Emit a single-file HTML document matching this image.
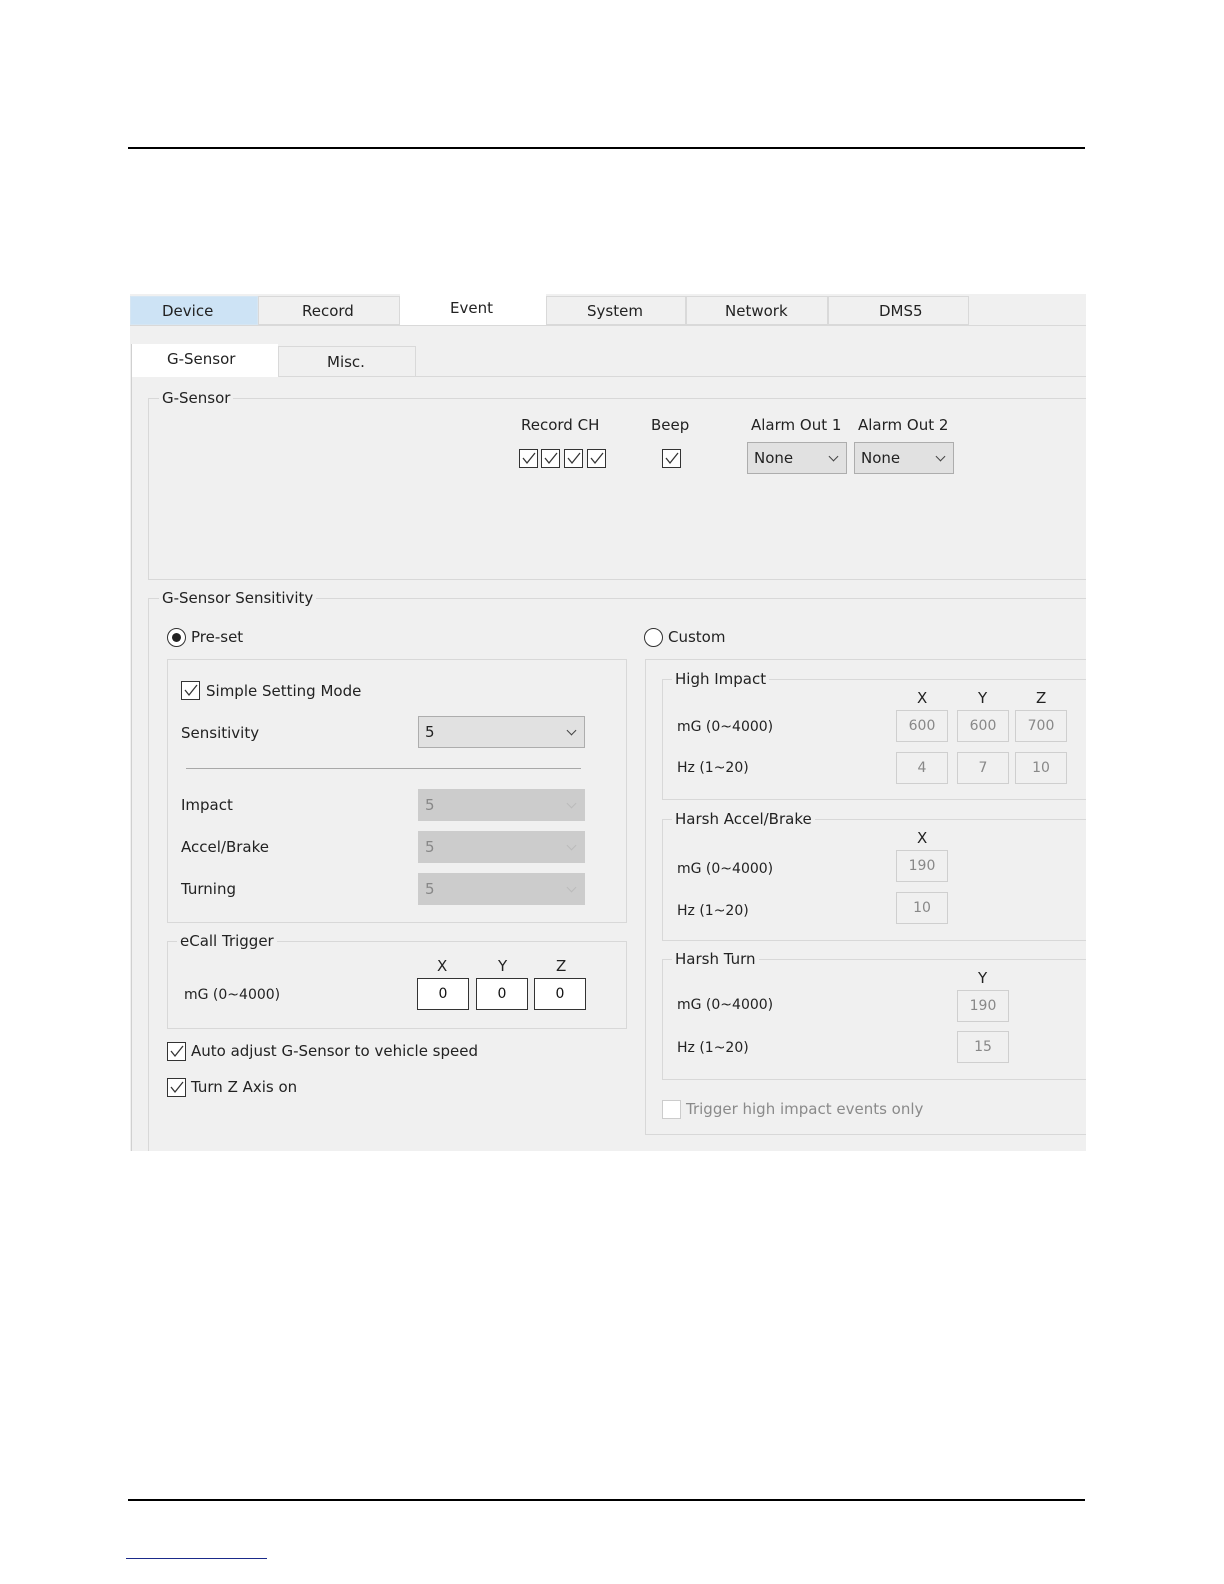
<!DOCTYPE html>
<html><head><meta charset="utf-8"><style>
body{margin:0;width:1224px;height:1584px;background:#fff;position:relative;overflow:hidden;font-family:"DejaVu Sans","Liberation Sans",sans-serif;font-size:14px;color:#222}
.a{position:absolute}
.t{position:absolute;white-space:nowrap;line-height:18px}
.g{position:absolute;border:1px solid #d8d8d8;}
.lb{position:absolute;background:#f0f0f0;padding:0 3px;line-height:18px;white-space:nowrap}
.cb{position:absolute;width:17px;height:17px;border:1px solid #333;background:#fff}
.cb svg{position:absolute;left:1px;top:2px}
.dd{position:absolute;border:1px solid #adadad;background:#e1e1e1;line-height:30px;padding-left:6px;box-sizing:border-box}
.dd.dis{background:#cccccc;border-color:#cccccc;color:#888}
.dd:after{content:"";position:absolute;right:9px;top:10px;width:6px;height:6px;border-right:1.3px solid #444;border-bottom:1.3px solid #444;transform:rotate(45deg)}
.dd.dis:after{border-color:#bbb}
.in{position:absolute;width:52px;height:32px;box-sizing:border-box;border:1px solid #cfcfcf;background:#f0f0f0;color:#888;text-align:center;line-height:30px}
.in.w{background:#fff;border:1px solid #333;color:#111}
.rd{position:absolute;width:17px;height:17px;border:1px solid #333;border-radius:50%;background:#fff}
</style></head><body>
<div class="a" style="left:128px;top:147px;width:957px;height:2px;background:#000"></div>
<div class="a" style="left:128px;top:1499px;width:957px;height:2px;background:#000"></div>
<div class="a" style="left:126px;top:1558px;width:141px;height:1px;background:#1a2a8a"></div>

<div class="a" style="left:130px;top:294px;width:956px;height:857px;background:#f0f0f0"></div>
<div class="a" style="left:130px;top:296px;width:128px;height:29px;background:#cde3f5;border:1px solid #d6e6f3;box-sizing:border-box"></div>
<div class="a" style="left:258px;top:296px;width:142px;height:29px;background:#f0f0f0;border:1px solid #d9d9d9;box-sizing:border-box"></div>
<div class="a" style="left:400px;top:294px;width:146px;height:32px;background:#fff"></div>
<div class="a" style="left:546px;top:296px;width:140px;height:29px;border:1px solid #d9d9d9;box-sizing:border-box"></div>
<div class="a" style="left:686px;top:296px;width:142px;height:29px;border:1px solid #d9d9d9;box-sizing:border-box"></div>
<div class="a" style="left:828px;top:296px;width:141px;height:29px;border:1px solid #d9d9d9;box-sizing:border-box"></div>
<div class="a" style="left:130px;top:325px;width:956px;height:1px;background:#d9d9d9"></div>
<div class="t" style="left:162px;top:302px;font-size:15px">Device</div>
<div class="t" style="left:302px;top:302px;font-size:15px">Record</div>
<div class="t" style="left:450px;top:299px;font-size:15px">Event</div>
<div class="t" style="left:587px;top:302px;font-size:15px">System</div>
<div class="t" style="left:725px;top:302px;font-size:15px">Network</div>
<div class="t" style="left:879px;top:302px;font-size:15px">DMS5</div>
<div class="a" style="left:131px;top:344px;width:1px;height:807px;background:#d0d0d0"></div>
<div class="a" style="left:132px;top:344px;width:146px;height:33px;background:#fff"></div>
<div class="a" style="left:278px;top:346px;width:138px;height:31px;border:1px solid #d9d9d9;box-sizing:border-box"></div>
<div class="a" style="left:278px;top:376px;width:808px;height:1px;background:#d9d9d9"></div>
<div class="t" style="left:167px;top:350px;font-size:15px">G-Sensor</div>
<div class="t" style="left:327px;top:353px;font-size:15px">Misc.</div>

<div class="g" style="left:148px;top:398px;width:945px;height:180px"></div>
<div class="lb" style="left:159px;top:389px;font-size:15px">G-Sensor</div>
<div class="t" style="left:521px;top:416px;font-size:15px">Record CH</div>
<div class="t" style="left:651px;top:416px;font-size:15px">Beep</div>
<div class="t" style="left:751px;top:416px;font-size:15px">Alarm Out 1</div>
<div class="t" style="left:858px;top:416px;font-size:15px">Alarm Out 2</div>
<div class="cb" style="left:519px;top:449px"><svg width="15" height="13"><polyline points="2,6 6,11 14,1" fill="none" stroke="#333" stroke-width="1.3"/></svg></div>
<div class="cb" style="left:541px;top:449px"><svg width="15" height="13"><polyline points="2,6 6,11 14,1" fill="none" stroke="#333" stroke-width="1.3"/></svg></div>
<div class="cb" style="left:564px;top:449px"><svg width="15" height="13"><polyline points="2,6 6,11 14,1" fill="none" stroke="#333" stroke-width="1.3"/></svg></div>
<div class="cb" style="left:587px;top:449px"><svg width="15" height="13"><polyline points="2,6 6,11 14,1" fill="none" stroke="#333" stroke-width="1.3"/></svg></div>
<div class="cb" style="left:662px;top:449px"><svg width="15" height="13"><polyline points="2,6 6,11 14,1" fill="none" stroke="#333" stroke-width="1.3"/></svg></div>
<div class="dd" style="left:747px;top:442px;width:100px;height:32px;font-size:15px">None</div>
<div class="dd" style="left:854px;top:442px;width:100px;height:32px;font-size:15px">None</div>

<div class="g" style="left:148px;top:598px;width:945px;height:570px"></div>
<div class="lb" style="left:159px;top:589px;font-size:15px">G-Sensor Sensitivity</div>
<div class="rd" style="left:167px;top:628px"><div class="a" style="left:4px;top:4px;width:9px;height:9px;border-radius:50%;background:#222"></div></div>
<div class="t" style="left:191px;top:628px;font-size:15px">Pre-set</div>
<div class="rd" style="left:644px;top:628px"></div>
<div class="t" style="left:668px;top:628px;font-size:15px">Custom</div>

<div class="g" style="left:167px;top:659px;width:458px;height:262px"></div>
<div class="cb" style="left:181px;top:681px"><svg width="15" height="13"><polyline points="2,6 6,11 14,1" fill="none" stroke="#333" stroke-width="1.3"/></svg></div>
<div class="t" style="left:206px;top:682px;font-size:15px">Simple Setting Mode</div>
<div class="t" style="left:181px;top:724px;font-size:15px">Sensitivity</div>
<div class="dd" style="left:418px;top:716px;width:167px;height:32px;font-size:15px">5</div>
<div class="a" style="left:186px;top:768px;width:395px;height:1px;background:#a8a8a8"></div>
<div class="t" style="left:181px;top:796px;font-size:15px">Impact</div>
<div class="dd dis" style="left:418px;top:789px;width:167px;height:32px;font-size:15px">5</div>
<div class="t" style="left:181px;top:838px;font-size:15px">Accel/Brake</div>
<div class="dd dis" style="left:418px;top:831px;width:167px;height:32px;font-size:15px">5</div>
<div class="t" style="left:181px;top:880px;font-size:15px">Turning</div>
<div class="dd dis" style="left:418px;top:873px;width:167px;height:32px;font-size:15px">5</div>

<div class="g" style="left:167px;top:941px;width:458px;height:86px"></div>
<div class="lb" style="left:177px;top:932px;font-size:15px">eCall Trigger</div>
<div class="t" style="left:437px;top:957px;font-size:15px">X</div>
<div class="t" style="left:498px;top:957px;font-size:15px">Y</div>
<div class="t" style="left:556px;top:957px;font-size:15px">Z</div>
<div class="t" style="left:184px;top:986px;font-size:14px">mG (0~4000)</div>
<div class="in w" style="left:417px;top:978px">0</div>
<div class="in w" style="left:476px;top:978px">0</div>
<div class="in w" style="left:534px;top:978px">0</div>

<div class="cb" style="left:167px;top:1042px"><svg width="15" height="13"><polyline points="2,6 6,11 14,1" fill="none" stroke="#333" stroke-width="1.3"/></svg></div>
<div class="t" style="left:191px;top:1042px;font-size:15px">Auto adjust G-Sensor to vehicle speed</div>
<div class="cb" style="left:167px;top:1078px"><svg width="15" height="13"><polyline points="2,6 6,11 14,1" fill="none" stroke="#333" stroke-width="1.3"/></svg></div>
<div class="t" style="left:191px;top:1078px;font-size:15px">Turn Z Axis on</div>

<div class="g" style="left:645px;top:659px;width:460px;height:474px"></div>
<div class="g" style="left:662px;top:679px;width:440px;height:119px"></div>
<div class="lb" style="left:672px;top:670px;font-size:15px">High Impact</div>
<div class="t" style="left:917px;top:689px;font-size:15px">X</div>
<div class="t" style="left:978px;top:689px;font-size:15px">Y</div>
<div class="t" style="left:1036px;top:689px;font-size:15px">Z</div>
<div class="t" style="left:677px;top:718px">mG (0~4000)</div>
<div class="t" style="left:677px;top:759px">Hz (1~20)</div>
<div class="in" style="left:896px;top:710px">600</div>
<div class="in" style="left:957px;top:710px">600</div>
<div class="in" style="left:1015px;top:710px">700</div>
<div class="in" style="left:896px;top:752px">4</div>
<div class="in" style="left:957px;top:752px">7</div>
<div class="in" style="left:1015px;top:752px">10</div>

<div class="g" style="left:662px;top:819px;width:440px;height:120px"></div>
<div class="lb" style="left:672px;top:810px;font-size:15px">Harsh Accel/Brake</div>
<div class="t" style="left:917px;top:829px;font-size:15px">X</div>
<div class="t" style="left:677px;top:860px">mG (0~4000)</div>
<div class="t" style="left:677px;top:902px">Hz (1~20)</div>
<div class="in" style="left:896px;top:850px">190</div>
<div class="in" style="left:896px;top:892px">10</div>

<div class="g" style="left:662px;top:959px;width:440px;height:119px"></div>
<div class="lb" style="left:672px;top:950px;font-size:15px">Harsh Turn</div>
<div class="t" style="left:978px;top:969px;font-size:15px">Y</div>
<div class="t" style="left:677px;top:996px">mG (0~4000)</div>
<div class="t" style="left:677px;top:1039px">Hz (1~20)</div>
<div class="in" style="left:957px;top:990px">190</div>
<div class="in" style="left:957px;top:1031px">15</div>

<div class="cb" style="left:662px;top:1100px;border-color:#ccc"></div>
<div class="t" style="left:686px;top:1100px;font-size:15px;color:#8a8a8a">Trigger high impact events only</div>

<div class="a" style="left:1086px;top:280px;width:138px;height:920px;background:#fff"></div>
<div class="a" style="left:100px;top:1151px;width:1124px;height:60px;background:#fff"></div>
</body></html>
